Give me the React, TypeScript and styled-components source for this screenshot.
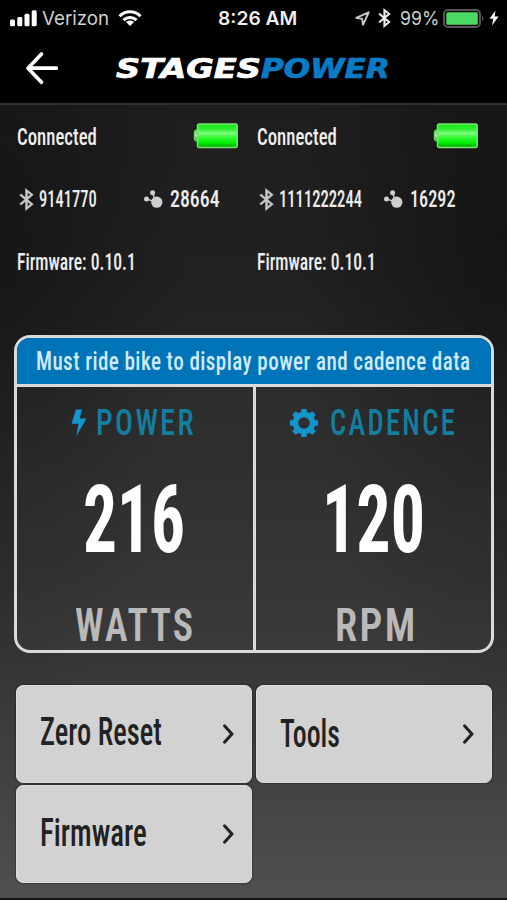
import React, { useLayoutEffect, useRef, useState } from "react";
import styled, { createGlobalStyle } from "styled-components";

const GlobalStyle = createGlobalStyle`
  * { box-sizing: border-box; }
  body { margin: 0; background: #000; }
`;

const Screen = styled.main`
  width: 507px;
  height: 900px;
  overflow: hidden;
  display: flex;
  flex-direction: column;
  font-family: Roboto, "Liberation Sans", sans-serif;
  color: #ededed;
  background: #000;
`;

const StatusBar = styled.div`
  height: 36px;
  flex: none;
  display: flex;
  align-items: center;
  padding: 0 7px 0 10px;
  font-family: Inter, "Liberation Sans", sans-serif;
  color: #dedede;
`;

const StatusGroup = styled.div<{ $width: number }>`
  width: ${(p) => p.$width}px;
  display: flex;
  align-items: center;
`;

const Gap = styled.span<{ $w: number }>`
  width: ${(p) => p.$w}px;
  flex: none;
`;

const TitleBar = styled.header`
  height: 67px;
  flex: none;
  display: flex;
  align-items: flex-start;
  padding: 15px 0 0 25px;
`;

const BackButton = styled.button`
  width: 91px;
  height: 36px;
  padding: 0;
  border: 0;
  background: none;
  color: #fff;
  text-align: left;
`;

const Logo = styled.h1`
  margin: 0;
  height: 36px;
  display: flex;
  align-items: center;
  font-family: "DejaVu Sans", sans-serif;
  font-style: oblique;
  -webkit-text-stroke: 0.7px currentColor;
`;

const Content = styled.section`
  height: 795px;
  flex: none;
  border-top: 2px solid #303030;
  background:
    radial-gradient(ellipse 190px 480px at 0 20%, rgba(0, 0, 0, 0.32), transparent),
    radial-gradient(ellipse 210px 480px at 100% 20%, rgba(0, 0, 0, 0.36), transparent),
    linear-gradient(180deg, #1e1e1e 0, #212121 22%, #292929 40%, #303030 56%, #373737 70%, #414141 84%, #505050 100%);
`;

const Sensors = styled.div`
  display: grid;
  grid-template-columns: 240px 240px;
  padding: 1px 0 0 17px;
  height: 230px;
`;

const Sensor = styled.div`
  display: grid;
  grid-template-rows: 62px 63px 62px;
  align-content: start;
`;

const SensorRow = styled.div`
  display: flex;
  align-items: center;
`;

const IdCell = styled.div<{ $width: number }>`
  width: ${(p) => p.$width}px;
  display: flex;
  align-items: center;
`;

const Metrics = styled.div`
  width: 480px;
  height: 318px;
  margin-left: 14px;
  border: 3px solid #d8dadb;
  border-radius: 16px;
  overflow: hidden;
`;

const Banner = styled.div`
  height: 49px;
  display: flex;
  align-items: center;
  padding-left: 19px;
  background: #0074b8;
  border-bottom: 3px solid #d8dadb;
`;

const MetricGrid = styled.div`
  height: 263px;
  display: grid;
  grid-template-columns: 238.5px 235.5px;
`;

const Metric = styled.div<{ $divider?: boolean }>`
  display: grid;
  grid-template-rows: 72px 120px 71px;
  background: rgba(255, 255, 255, 0.025);
  border-right: ${(p) => (p.$divider ? "3px solid #d8dadb" : "0")};
`;

const MetricRow = styled.div<{ $pad: number; $drop?: number }>`
  display: flex;
  align-items: center;
  padding-left: ${(p) => p.$pad}px;
  padding-top: ${(p) => p.$drop ?? 0}px;
`;

const Actions = styled.nav`
  display: grid;
  grid-template-columns: 236px 236px;
  grid-auto-rows: 98px;
  column-gap: 4px;
  row-gap: 2px;
  padding: 32px 0 0 15.5px;
`;

const Action = styled.button<{ $drop: number }>`
  display: flex;
  align-items: center;
  justify-content: space-between;
  padding: 0 16px 0 23px;
  border: 1px solid #dcdcdc;
  border-radius: 7px;
  background: #d2d2d2;
  color: #222;
  font-family: inherit;
  box-shadow: 0 0 1px 1px rgba(30, 30, 30, 0.45);

  & > span {
    margin-top: ${(p) => p.$drop}px;
  }
`;

const Bottom = styled.div`
  height: 2px;
  background: #170f12;
`;

const FitBox = styled.span<{ $width: number; $size: number }>`
  display: block;
  flex: none;
  width: ${(p) => p.$width}px;
  height: ${(p) => p.$size}px;
  font-size: ${(p) => p.$size}px;
  line-height: ${(p) => p.$size}px;
`;

const FitInner = styled.span<{ $weight: number; $spacing: number; $color: string }>`
  display: inline-block;
  vertical-align: top;
  white-space: nowrap;
  transform-origin: 0 50%;
  font-weight: ${(p) => p.$weight};
  font-stretch: 75%;
  letter-spacing: ${(p) => p.$spacing}em;
  color: ${(p) => p.$color};
`;

type FitProps = {
  children: string;
  width: number;
  size: number;
  weight?: number;
  spacing?: number;
  color?: string;
};

/* Condenses or widens a line of text so that it spans exactly the given width. */
function Fit({ children, width, size, weight = 500, spacing = 0, color = "inherit" }: FitProps) {
  const ref = useRef<HTMLSpanElement>(null);
  const [scale, setScale] = useState(1);
  useLayoutEffect(() => {
    if (ref.current) setScale(width / (ref.current.offsetWidth - spacing * size));
  }, [children, width, size, spacing]);
  return (
    <FitBox $width={width} $size={size}>
      <FitInner ref={ref} $weight={weight} $spacing={spacing} $color={color} style={{ transform: `scaleX(${scale})` }}>
        {children}
      </FitInner>
    </FitBox>
  );
}

const Bluetooth = ({ w, h, color, stroke = 2 }: { w: number; h: number; color: string; stroke?: number }) => (
  <svg width={w} height={h} viewBox="0 0 12 22" preserveAspectRatio="none" fill="none" stroke={color} strokeWidth={stroke}>
    <path d="M1 6.2 10.3 15.5 6 19.6V2.4l4.3 4.1L1 15.8" />
  </svg>
);

const AntIcon = () => (
  <svg width="20" height="20" viewBox="0 0 20 20" fill="#cfcfcf" stroke="#cfcfcf">
    <circle cx="12.8" cy="12.2" r="5.6" stroke="none" />
    <circle cx="8.6" cy="2.8" r="2.5" stroke="none" />
    <circle cx="2.5" cy="9.1" r="2.5" stroke="none" />
    <path d="m8.6 3 3 8M2.5 9.1l9 2.5" strokeWidth="1.4" />
  </svg>
);

const GreenBattery = () => (
  <svg width="46" height="28" viewBox="0 0 46 28">
    <defs>
      <linearGradient id="cell" x1="0" y1="0" x2="0" y2="1">
        <stop offset="0" stopColor="#12e612" />
        <stop offset="0.22" stopColor="#30ee30" />
        <stop offset="0.4" stopColor="#7cff7c" />
        <stop offset="0.55" stopColor="#3cf83c" />
        <stop offset="0.8" stopColor="#00f000" />
        <stop offset="1" stopColor="#009c00" />
      </linearGradient>
      <linearGradient id="tip" x1="0" y1="0" x2="0" y2="1">
        <stop offset="0" stopColor="#3bdc3b" />
        <stop offset="0.5" stopColor="#c7dcc4" />
        <stop offset="1" stopColor="#2c8e2c" />
      </linearGradient>
    </defs>
    <rect x="1.3" y="7" width="6" height="11" rx="2" fill="url(#tip)" stroke="#66df62" />
    <rect x="4.5" y="1" width="39.7" height="23.4" rx="1.8" fill="url(#cell)" stroke="#78e570" strokeWidth="1.5" />
  </svg>
);

const Gear = () => (
  <svg width="30" height="30" viewBox="0 0 30 30">
    <circle cx="15" cy="15" r="8.5" fill="none" stroke="#1296cd" strokeWidth="5.4" />
    {[0, 45, 90, 135, 180, 225, 270, 315].map((a) => (
      <path key={a} d="M12 4.8 12.4.9h5.2l.4 3.9z" fill="#1296cd" transform={`rotate(${a} 15 15)`} />
    ))}
  </svg>
);

const Chevron = () => (
  <svg width="13" height="22" viewBox="0 0 13 22" fill="none" stroke="#222" strokeWidth="3" strokeLinecap="round">
    <path d="m2.5 2.8 7.4 8.2-7.4 8.2" />
  </svg>
);

const sensors = [
  { name: "left", bt: "9141770", btWidth: 58, idCell: 127, ant: "28664", antWidth: 50 },
  { name: "right", bt: "1111222244", btWidth: 83, idCell: 127, ant: "16292", antWidth: 46 },
];

const actions = [
  { label: "Zero Reset", width: 122, drop: -4 },
  { label: "Tools", width: 60, drop: 0 },
  { label: "Firmware", width: 107, drop: -1 },
];

export default function App() {
  return (
    <Screen>
      <GlobalStyle />
      <StatusBar>
        <StatusGroup $width={208}>
          <svg width="27" height="17" viewBox="0 0 27 17" fill="#fff">
            <rect x="0" y="9.5" width="5" height="6.8" rx="1.5" />
            <rect x="7.3" y="7" width="5" height="9.3" rx="1.5" />
            <rect x="14.5" y="3.7" width="5" height="12.6" rx="1.5" />
            <rect x="21.7" y="0.2" width="5" height="16.1" rx="1.5" />
          </svg>
          <Gap $w={5} />
          <Fit width={67} size={19} weight={400} color="#cfcfcf">Verizon</Fit>
          <Gap $w={9} />
          <svg width="24" height="17" viewBox="0 0 24 17" fill="none" stroke="#fff" strokeWidth="3">
            <path d="M1.5 6.3C7.3.2 16.7.2 22.5 6.3M5.5 10.1c3.6-3.5 9.4-3.5 13 0" />
            <path d="m12 16-4-4c2.2-2 5.8-2 8 0z" fill="#fff" stroke="none" />
          </svg>
        </StatusGroup>
        <StatusGroup $width={137}>
          <Fit width={79} size={19} weight={600} color="#eee">8:26 AM</Fit>
        </StatusGroup>
        <StatusGroup $width={145}>
          <svg width="15" height="15" viewBox="0 0 15 15" fill="none" stroke="#c8c8c8" strokeWidth="1.9" strokeLinejoin="round">
            <path d="M13.7 1.3 1.2 6.9l5.9.9.9 6z" />
          </svg>
          <Gap $w={8} />
          <Bluetooth w={13} h={20} color="#eee" />
          <Gap $w={9} />
          <Fit width={39} size={19} weight={400} color="#cfcfcf">99%</Fit>
          <Gap $w={4} />
          <svg width="42" height="19" viewBox="0 0 42 19">
            <rect x="1" y="1" width="36" height="17" rx="4" fill="#0a0a0a" stroke="#555" strokeWidth="2" />
            <rect x="3.3" y="3.3" width="31.5" height="12.4" rx="1.5" fill="#4bd964" />
            <path d="M39 6.4q3 3 0 6z" fill="#555" />
          </svg>
          <Gap $w={4} />
          <svg width="10" height="16" viewBox="0 0 10 16" fill="#fff">
            <path d="M6.5.5.5 8.7h3.7L3 15.5l6.5-9H5.6z" />
          </svg>
        </StatusGroup>
      </StatusBar>

      <TitleBar>
        <BackButton aria-label="Back">
          <svg width="34" height="34" viewBox="0 0 34 34" fill="none" stroke="currentColor" strokeWidth="3.7" strokeLinecap="round" strokeLinejoin="round">
            <path d="M16.5 3 3 17.2l13.5 14M3.5 17.2h27.8" />
          </svg>
        </BackButton>
        <Logo>
          <Fit width={145} size={26} weight={700} color="#fff">STAGES</Fit>
          <Fit width={129} size={26} weight={700} color="#087bc4">POWER</Fit>
        </Logo>
      </TitleBar>

      <Content>
        <Sensors>
          {sensors.map((s) => (
            <Sensor key={s.name}>
              <SensorRow>
                <Fit width={80} size={23}>Connected</Fit>
                <Gap $w={96} />
                <GreenBattery />
              </SensorRow>
              <SensorRow>
                <IdCell $width={s.idCell}>
                  <Gap $w={2} />
                  <Bluetooth w={15} h={23} color="#c4c4c4" />
                  <Gap $w={5} />
                  <Fit width={s.btWidth} size={23}>{s.bt}</Fit>
                </IdCell>
                <AntIcon />
                <Gap $w={6} />
                <Fit width={s.antWidth} size={23}>{s.ant}</Fit>
              </SensorRow>
              <SensorRow>
                <Fit width={119} size={23}>Firmware: 0.10.1</Fit>
              </SensorRow>
            </Sensor>
          ))}
        </Sensors>

        <Metrics>
          <Banner>
            <Fit width={434} size={26} spacing={0.02} color="#cfeaff">Must ride bike to display power and cadence data</Fit>
          </Banner>
          <MetricGrid>
            <Metric $divider>
              <MetricRow $pad={54}>
                <svg width="16" height="28" viewBox="0 0 16 28" fill="#1296cd">
                  <path d="M5 .5h6L8.8 9.6h6.7L5.2 27.5l2.4-12.7H.5z" />
                </svg>
                <Gap $w={9} />
                <Fit width={98} size={36.5} weight={500} spacing={0.08} color="#137e9f">POWER</Fit>
              </MetricRow>
              <MetricRow $pad={66}>
                <Fit width={102} size={95} weight={700} color="#fff">216</Fit>
              </MetricRow>
              <MetricRow $pad={58} $drop={20}>
                <Fit width={118} size={47} weight={600} spacing={0.06} color="#b9b9b9">WATTS</Fit>
              </MetricRow>
            </Metric>
            <Metric>
              <MetricRow $pad={33}>
                <Gear />
                <Gap $w={11} />
                <Fit width={125} size={36.5} weight={500} spacing={0.08} color="#137e9f">CADENCE</Fit>
              </MetricRow>
              <MetricRow $pad={66}>
                <Fit width={103} size={95} weight={700} color="#fff">120</Fit>
              </MetricRow>
              <MetricRow $pad={79} $drop={20}>
                <Fit width={80} size={47} weight={600} spacing={0.06} color="#b9b9b9">RPM</Fit>
              </MetricRow>
            </Metric>
          </MetricGrid>
        </Metrics>

        <Actions>
          {actions.map((a) => (
            <Action key={a.label} $drop={a.drop}>
              <Fit width={a.width} size={39}>{a.label}</Fit>
              <Chevron />
            </Action>
          ))}
        </Actions>
      </Content>
      <Bottom />
    </Screen>
  );
}
